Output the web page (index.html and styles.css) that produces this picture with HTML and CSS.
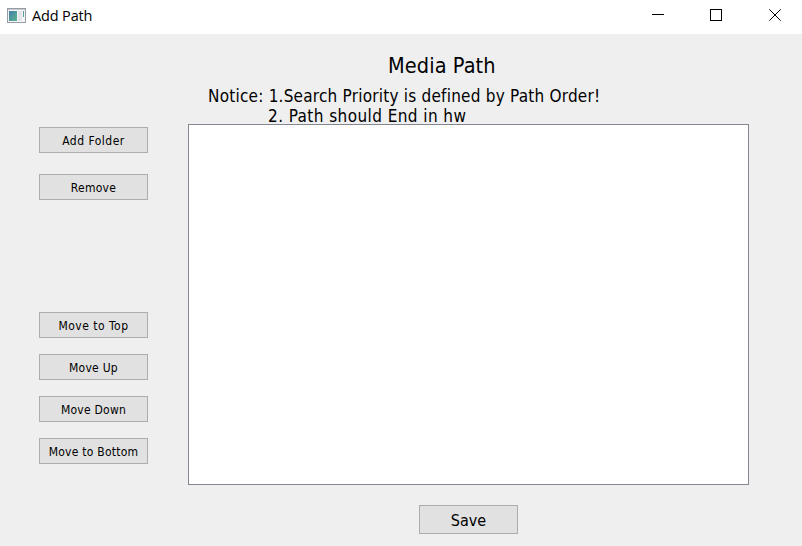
FILE: index.html
```
<!DOCTYPE html>
<html lang="en">
<head>
<meta charset="utf-8">
<title>Add Path</title>
<link rel="stylesheet" href="styles.css">
</head>
<body>
<header class="titlebar">
  <svg class="app-icon" width="19" height="15" viewBox="0 0 19 15">
    <defs><linearGradient id="g" x1="0" y1="0" x2="1" y2="1"><stop offset="0" stop-color="#477eae"/><stop offset="1" stop-color="#57b58a"/></linearGradient></defs>
    <rect x=".5" y=".5" width="18" height="14" fill="#f4f5f7" stroke="#979da5"/>
    <path d="M1 1.5h17" stroke="#c4c9ce"/>
    <rect x="2" y="3" width="8" height="10" fill="url(#g)"/>
    <rect x="11" y="3" width="4" height="10" fill="#e3e5e8"/>
    <path d="M16.5 3v6" stroke="#5c9c96"/>
  </svg>
  <span class="window-title">Add Path</span>
  <svg class="controls" width="130" height="12" viewBox="0 0 130 12" fill="none" stroke="#000">
    <path d="M0 5.5h12"/>
    <rect x="58.5" y=".5" width="11" height="11"/>
    <path d="M117.3.3l11.4 11.4M128.7.3l-11.4 11.4"/>
  </svg>
</header>
<main class="content">
  <nav class="actions">
    <button class="wide">Add Folder</button>
    <button class="remove">Remove</button>
    <button class="wide">Move to Top</button>
    <button>Move Up</button>
    <button>Move Down</button>
    <button>Move to Bottom</button>
  </nav>
  <section class="paths">
    <h1>Media Path</h1>
    <p class="notice">Notice: 1.Search Priority is defined by Path Order!</p>
    <p class="notice second">2. Path should End in hw</p>
    <div class="list"></div>
    <button class="save">Save</button>
  </section>
</main>
</body>
</html>
```
FILE: styles.css
```
* { box-sizing: border-box; }
body {
  margin: 0;
  width: 802px;
  height: 546px;
  overflow: hidden;
  background: #efefef;
  color: #000;
  font-family: "DejaVu Sans Condensed", "DejaVu Sans", sans-serif;
  font-stretch: condensed;
  font-variant-ligatures: none;
}
.titlebar {
  display: flex;
  align-items: center;
  height: 34px;
  padding: 0 20px 4px 7px;
  background: #fff;
}
.window-title {
  margin: 1px 0 0 6px;
  font: 14.5px/20px "Open Sans", sans-serif;
  letter-spacing: -0.15px;
}
.controls { margin-left: auto; }
.content { display: flex; gap: 40px; padding-left: 39px; }
.actions {
  display: flex;
  flex-direction: column;
  gap: 16px;
  width: 109px;
  padding-top: 93px;
}
button {
  height: 26px;
  padding: 1px 0 0;
  border: 1px solid #adadad;
  border-radius: 0;
  background: #e1e1e1;
  color: #000;
  font: inherit;
  font-size: 12px;
  letter-spacing: 0.25px;
  white-space: nowrap;
}
.wide { letter-spacing: 0.5px; }
.remove { margin: 5px 0 96px; }
.paths { width: 561px; }
h1 {
  margin: 19px 0 0 200px;
  font-size: 21.5px;
  font-weight: 400;
  line-height: 26px;
  letter-spacing: 0.1px;
}
.notice {
  margin: 7px 0 0 20px;
  font-size: 17px;
  line-height: 20px;
  letter-spacing: 0.22px;
  white-space: nowrap;
}
.second {
  height: 18px;
  margin: 0 0 0 80px;
  letter-spacing: 0.42px;
}
.list {
  height: 361px;
  border: 1px solid #828790;
  background: #fff;
}
.save {
  display: block;
  width: 99px;
  height: 29px;
  margin: 20px 0 0 231px;
  font-size: 16px;
  letter-spacing: 0;
}
```
